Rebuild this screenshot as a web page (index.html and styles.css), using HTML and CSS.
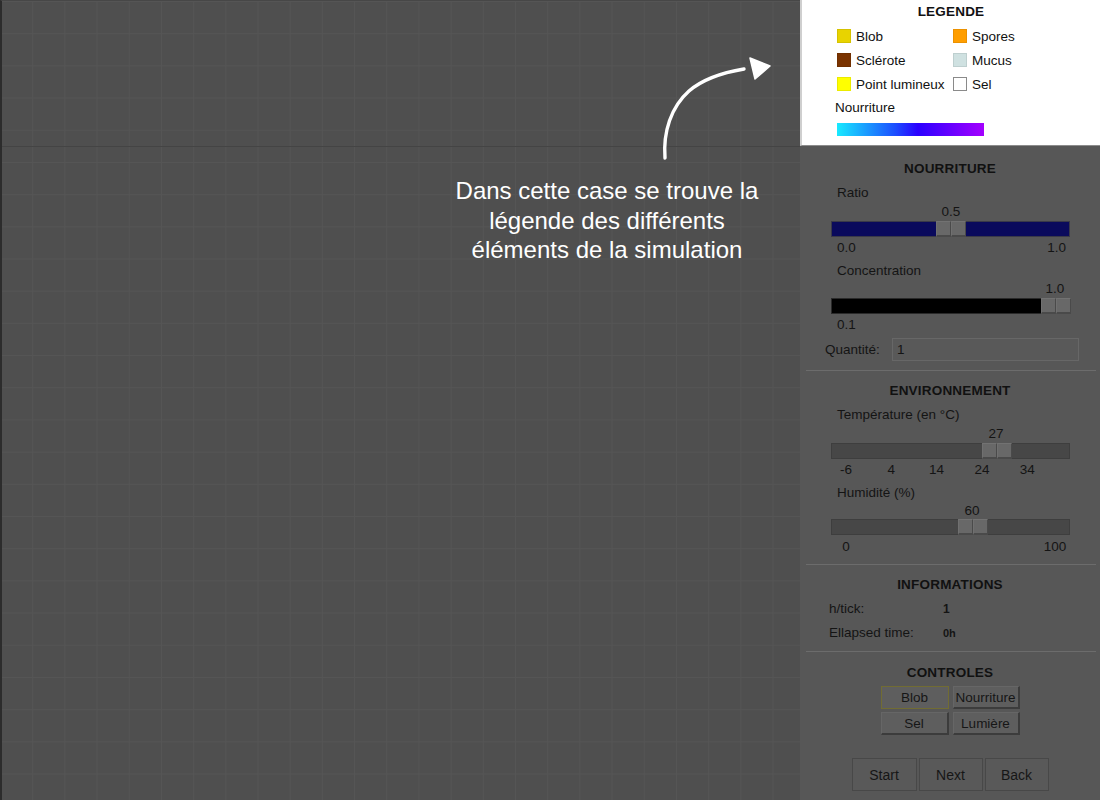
FILE: index.html
```html
<!DOCTYPE html>
<html lang="fr">
<head>
<meta charset="utf-8">
<title>Simulation Blob</title>
<link rel="stylesheet" href="styles.css">
</head>
<body>
<div class="app">
  <div class="canvas"></div>
  <aside class="panel">
    <section class="legend">
      <h2 class="legend-title">LEGENDE</h2>
      <div class="legend-grid">
        <div class="legend-item"><span class="sw sw-blob"></span>Blob</div>
        <div class="legend-item"><span class="sw sw-spores"></span>Spores</div>
        <div class="legend-item"><span class="sw sw-sclerote"></span>Sclérote</div>
        <div class="legend-item"><span class="sw sw-mucus"></span>Mucus</div>
        <div class="legend-item"><span class="sw sw-light"></span>Point lumineux</div>
        <div class="legend-item"><span class="sw sw-sel"></span>Sel</div>
      </div>
      <div class="legend-food">Nourriture</div>
      <div class="legend-gradient"></div>
    </section>

    <section class="sec sec-food">
      <h3 class="sec-title">NOURRITURE</h3>
      <div class="field-label first">Ratio</div>
      <div class="slider-value"><span class="thumb-label" style="margin-left:105px">0.5</span></div>
      <div class="track track-blue first-track"><span class="thumb" style="margin-left:104px"><i></i><i></i></span></div>
      <div class="range after-first"><span>0.0</span><span>1.0</span></div>
      <div class="field-label">Concentration</div>
      <div class="slider-value"><span class="thumb-label" style="margin-left:209px">1.0</span></div>
      <div class="track track-black tight"><span class="thumb" style="margin-left:209px"><i></i><i></i></span></div>
      <div class="range loose"><span>0.1</span></div>
      <div class="qty">
        <label class="qty-label">Quantité:</label>
        <div class="qty-input">1</div>
      </div>
    </section>
    <hr class="sep sep-food">

    <section class="sec">
      <h3 class="sec-title">ENVIRONNEMENT</h3>
      <div class="field-label first">Température (en °C)</div>
      <div class="slider-value"><span class="thumb-label" style="margin-left:150px">27</span></div>
      <div class="track tight"><span class="thumb" style="margin-left:150px"><i></i><i></i></span></div>
      <div class="ticks"><span>-6</span><span>4</span><span>14</span><span>24</span><span>34</span></div>
      <div class="field-label">Humidité (%)</div>
      <div class="slider-value"><span class="thumb-label" style="margin-left:126px">60</span></div>
      <div class="track flush"><span class="thumb" style="margin-left:126px"><i></i><i></i></span></div>
      <div class="range wide"><span>0</span><span>100</span></div>
    </section>
    <hr class="sep sep-env">

    <section class="sec">
      <h3 class="sec-title">INFORMATIONS</h3>
      <div class="info-row"><span class="info-key">h/tick:</span><b class="info-val">1</b></div>
      <div class="info-row"><span class="info-key">Ellapsed time:</span><b class="info-val small">0h</b></div>
    </section>
    <hr class="sep sep-info">

    <section class="sec">
      <h3 class="sec-title ctrl-title">CONTROLES</h3>
      <div class="ctrl-grid">
        <button class="ctrl-btn active">Blob</button>
        <button class="ctrl-btn">Nourriture</button>
        <button class="ctrl-btn">Sel</button>
        <button class="ctrl-btn">Lumière</button>
      </div>
      <div class="run-row">
        <button class="run-btn first">Start</button>
        <button class="run-btn">Next</button>
        <button class="run-btn">Back</button>
      </div>
    </section>
  </aside>
</div>

<div class="tour">
  <svg class="tour-arrow" width="150" height="120" viewBox="0 0 150 120">
    <path d="M25,108 C23,82 31,57 49,41 C63,29 80,23 104,19" fill="none" stroke="#fff" stroke-width="3.4" stroke-linecap="round"/>
    <polygon points="110,8 130,16 115,29" fill="#fff" stroke="#fff" stroke-width="1.5" stroke-linejoin="round"/>
  </svg>
  <p class="tour-text">Dans cette case se trouve la<br>légende des différents<br>éléments de la simulation</p>
</div>
</body>
</html>
```

FILE: styles.css
```css
* { box-sizing: border-box; }
html, body { margin: 0; padding: 0; }
body {
  width: 1100px;
  height: 800px;
  overflow: hidden;
  background: #4f4f4f;
  font-family: "Liberation Sans", Arial, Helvetica, sans-serif;
  font-size: 13.5px;
  color: #141414;
}

.app {
  display: flex;
  width: 1100px;
  height: 800px;
}

/* ---------- canvas ---------- */
.canvas {
  width: 800px;
  height: 800px;
  flex: none;
  border-left: 2px solid #2c2c2c;
  border-top: 1px solid #474747;
  background-color: #4f4f4f;
  background-image:
    linear-gradient(to bottom, transparent 145px, #444 145px, #444 146px, transparent 146px),
    linear-gradient(to right, #555 1px, transparent 1px),
    linear-gradient(to bottom, #555 1px, transparent 1px);
  background-size: 100% 100%, 32.2px 32.2px, 32.2px 32.2px;
  background-position: 0 0, -2px 0, 0 0;
  background-repeat: no-repeat, repeat, repeat;
}

/* ---------- panel ---------- */
.panel {
  width: 300px;
  height: 800px;
  flex: none;
  background: #575757;
  display: flex;
  flex-direction: column;
}

/* legend (highlighted) */
.legend {
  height: 146px;
  background: #fff;
  border-left: 2px solid #cfcfcf;
  border-bottom: 1px solid #8c8c8c;
  padding: 4px 0 0 35px;
  color: #111;
}
.legend-title {
  margin: 0;
  padding-right: 35px;
  text-align: center;
  font-size: 13.5px;
  line-height: 16px;
  font-weight: bold;
  letter-spacing: 0.2px;
}
.legend-grid {
  margin-top: 4px;
  display: grid;
  grid-template-columns: 116px auto;
  grid-auto-rows: 24px;
}
.legend-item {
  display: flex;
  align-items: center;
  gap: 5px;
  white-space: nowrap;
}
.sw {
  width: 14px;
  height: 14px;
  flex: none;
  border: 1px solid rgba(0,0,0,0.08);
}
.sw-blob { background: #e8d300; }
.sw-spores { background: #ff9e00; }
.sw-sclerote { background: #7a3300; }
.sw-mucus { background: #cfe1e1; }
.sw-light { background: #ffff00; }
.sw-sel { background: #fff; border-color: #8a8a8a; }
.legend-food {
  margin-top: 3px;
  margin-left: -2px;
  line-height: 17px;
}
.legend-gradient {
  margin-top: 7px;
  width: 147px;
  height: 13px;
  background: linear-gradient(to right, #18eaff 0%, #1c4cff 40%, #2a00ff 55%, #a400ff 100%);
}

/* sections */
.sec {
  display: flex;
  flex-direction: column;
}
.sec-title {
  margin: 12px 0 0;
  text-align: center;
  font-size: 13.5px;
  line-height: 16px;
  font-weight: bold;
  color: #111;
  letter-spacing: 0.2px;
}
.sec-food .sec-title { margin-top: 15px; }
.ctrl-title { margin-top: 13px; }

.field-label {
  margin: 7px 0 0 37px;
  line-height: 16px;
}
.field-label.first { margin-top: 8px; }

.slider-value {
  margin: 2px 0 0 31px;
  line-height: 16px;
  display: flex;
}
.field-label.first + .slider-value { margin-top: 3px; }
.thumb-label {
  width: 30px;
  text-align: center;
  flex: none;
}

.track {
  margin: 2px 0 0 31px;
  width: 239px;
  height: 16px;
  background: #474747;
  border: 1px solid #3e3e3e;
  display: flex;
  align-items: stretch;
}
.track.first-track { margin-top: 1px; }
.track.tight { margin-top: 1px; }
.track.flush { margin-top: 0; }
.track-blue { background: #0a0a5c; border-color: #3a3a48; }
.track-black { background: #000; border-color: #2a2a2a; }
.thumb {
  width: 30px;
  flex: none;
  display: flex;
  margin-top: -1px;
  margin-bottom: -1px;
}
.thumb i {
  flex: 1;
  background: #686868;
  border-top: 1px solid #727272;
  border-left: 1px solid #707070;
  border-right: 1px solid #4a4a4a;
  border-bottom: 2px solid #4a4a4a;
}

.range {
  margin: 2px 0 0 31px;
  width: 239px;
  display: flex;
  justify-content: space-between;
  line-height: 16px;
}
.range span { width: 20px; text-align: left; }
.range span + span { text-align: right; width: 30px; padding-right: 4px; }
.range.after-first { margin-top: 3px; }
.range.loose { margin-top: 3px; }
.range.wide { margin-top: 4px; }
.range.wide span { width: 30px; text-align: center; padding: 0; }
.range span:first-child { padding-left: 6px; width: 30px; }
.range.wide span:first-child { padding-left: 0; }

.ticks {
  margin: 3px 0 0 31px;
  display: flex;
  gap: 15.3px;
  line-height: 16px;
}
.ticks span { width: 30px; text-align: center; }

.qty {
  margin: 5px 0 0 25px;
  display: flex;
  align-items: center;
  height: 23px;
}
.qty-label { width: 67px; }
.qty-input {
  width: 187px;
  height: 23px;
  border: 1px solid #676767;
  background: #595959;
  padding: 0 0 0 4px;
  line-height: 21px;
}

.sep {
  margin: 0 4px 0 6px;
  border: 0;
  height: 1px;
  background: #6c6c6c;
}
.sep-food { margin-top: 9px; }
.sep-env { margin-top: 9px; }
.sep-info { margin-top: 10px; }

.info-row {
  margin: 8px 0 0 29px;
  display: flex;
  line-height: 16px;
}
.info-key { width: 114px; }
.info-val { font-weight: bold; font-size: 12px; }
.info-val.small { font-size: 11px; }

/* controls */
.ctrl-grid {
  margin-top: 5px;
  display: grid;
  grid-template-columns: 68px 67px;
  grid-auto-rows: 23px;
  gap: 3px 4px;
  justify-content: center;
}
.ctrl-btn {
  font-family: inherit;
  font-size: 13.5px;
  color: #161616;
  padding: 0;
  background: #5e5e5e;
  border: 1px solid #666;
  border-right: 2px solid #3c3c3c;
  border-bottom: 2px solid #3c3c3c;
}
.ctrl-btn.active {
  border: 1px solid #716c33;
}
.run-row {
  margin-top: 23px;
  display: flex;
  justify-content: center;
  gap: 2px;
}
.run-btn {
  width: 64px;
  height: 33px;
  font-family: inherit;
  font-size: 14px;
  color: #161616;
  background: #595959;
  border: 1px solid #484848;
  padding: 0;
}
.run-btn.first { width: 65px; }

/* ---------- tour overlay ---------- */
.tour {
  position: absolute;
  left: 0;
  top: 0;
  width: 1100px;
  height: 800px;
  pointer-events: none;
}
.tour-arrow {
  position: absolute;
  left: 640px;
  top: 50px;
}
.tour-text {
  position: absolute;
  left: 407px;
  top: 176px;
  width: 400px;
  margin: 0;
  text-align: center;
  color: #fff;
  font-size: 24px;
  line-height: 29.5px;
}
```
